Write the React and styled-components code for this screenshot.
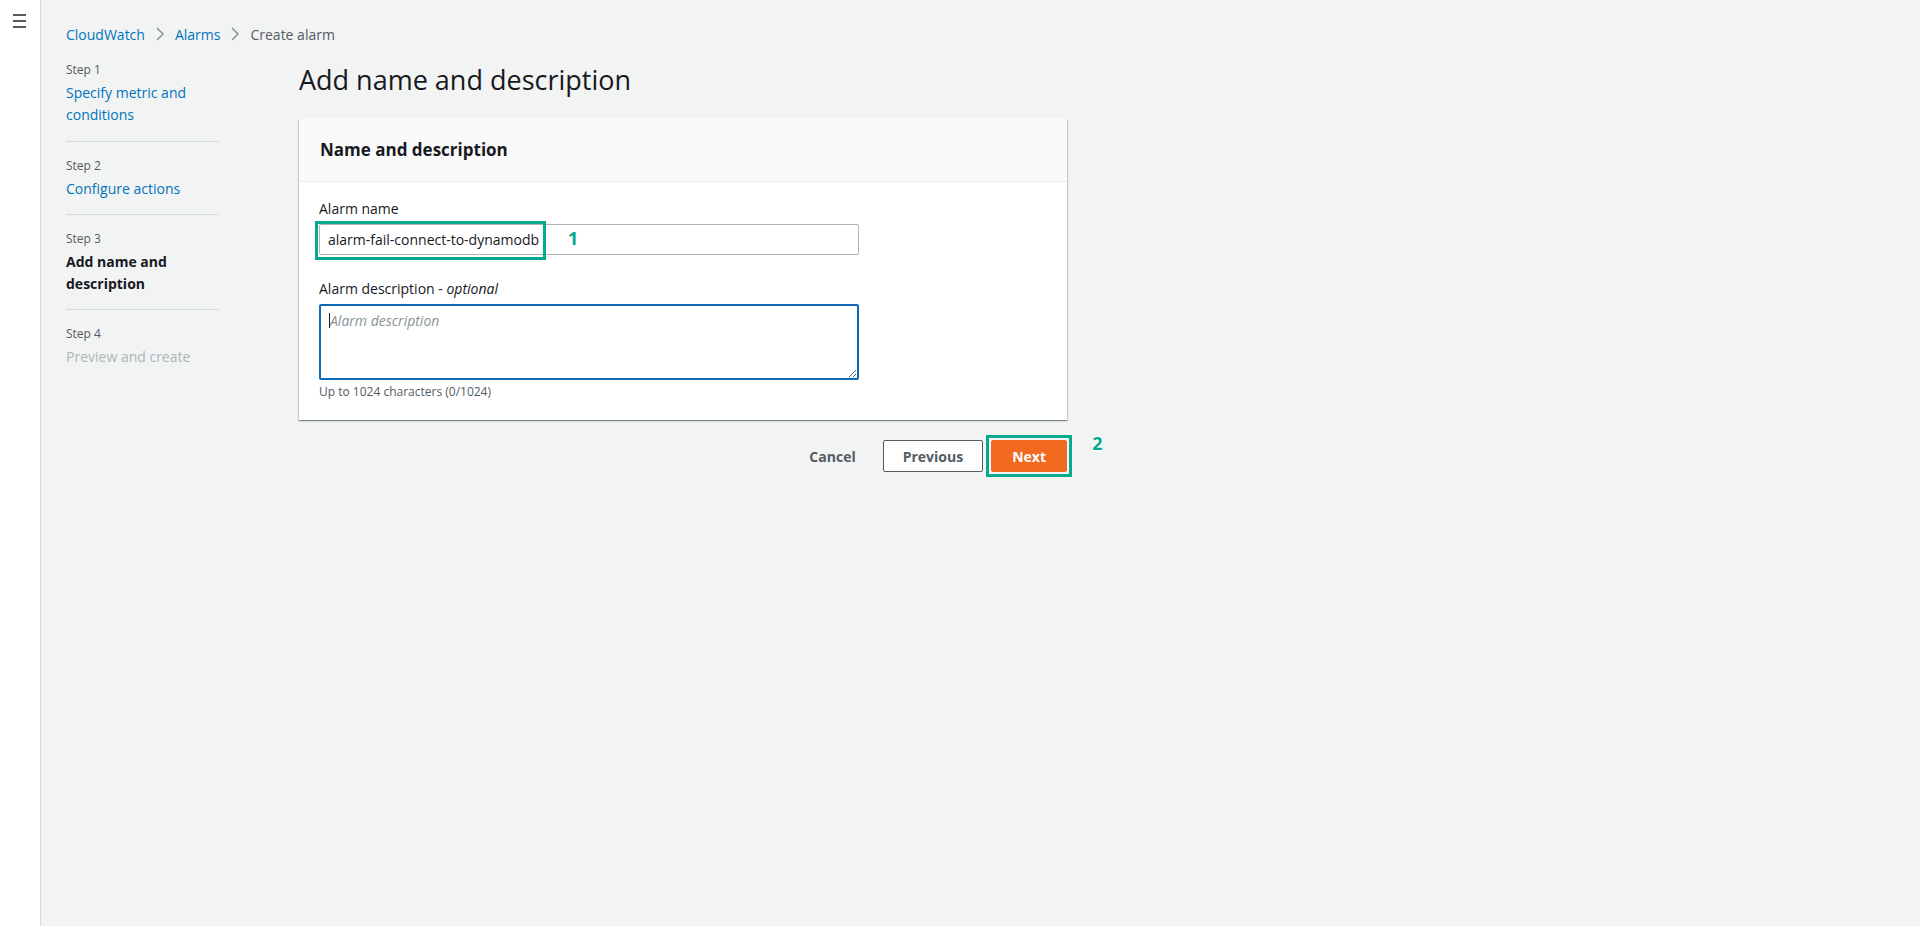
import React from "react";
import styled, { createGlobalStyle } from "styled-components";

const GlobalStyle = createGlobalStyle`
  html, body {
    margin: 0;
    padding: 0;
    background: #f2f3f3;
    font-family: "Open Sans", "Noto Sans", sans-serif;
    color: #16191f;
  }
  * {
    box-sizing: border-box;
  }
`;

const Page = styled.div`
  display: flex;
  min-height: 926px;
`;

const SideStrip = styled.div`
  width: 41px;
  flex-shrink: 0;
  background: #fff;
  border-right: 1px solid #d5dbdb;
  padding: 14px 0 0 13px;
`;

const Hamburger = styled.button`
  display: flex;
  flex-direction: column;
  gap: 4px;
  padding: 0;
  border: none;
  background: transparent;
  span {
    display: block;
    width: 13px;
    height: 2px;
    background: #545b64;
  }
`;

const Main = styled.div`
  flex: 1;
  padding: 24px 0 0 25px;
`;

const Crumbs = styled.nav`
  display: flex;
  align-items: center;
  height: 20px;
  font-size: 14px;
`;

const Crumb = styled.a`
  color: ${(p) => (p.$current ? "#545b64" : "#0073bb")};
  text-decoration: none;
`;

const Chevron = styled.span`
  display: inline-flex;
  margin: 0 10px;
  color: #879596;
`;

const Row = styled.div`
  display: flex;
  margin-top: 16px;
`;

const Steps = styled.ol`
  list-style: none;
  margin: 0;
  padding: 0;
  width: 153px;
  flex-shrink: 0;
`;

const StepItem = styled.li`
  padding: ${(p) => (p.$first ? "1px 0 15px" : "15px 0 14px")};
  border-bottom: ${(p) => (p.$last ? "none" : "1px solid #d5dbdb")};
`;

const StepNum = styled.div`
  font-size: 12px;
  line-height: 18px;
  color: #545b64;
  margin-bottom: 3px;
`;

const StepTitle = styled.div`
  font-size: 14px;
  line-height: 22px;
  color: ${(p) =>
    p.$state === "done" ? "#0073bb" : p.$state === "current" ? "#16191f" : "#aab7b8"};
  font-weight: ${(p) => (p.$state === "current" ? 700 : 400)};
`;

const Content = styled.div`
  margin-left: 80px;
  width: 768px;
`;

const Heading = styled.h1`
  margin: 0 0 19px;
  font-size: 27px;
  line-height: 40px;
  font-weight: 400;
  color: #16191f;
`;

const Panel = styled.section`
  background: #fff;
  box-shadow: 0 1px 1px 0 rgba(0, 28, 36, 0.3), 1px 1px 1px 0 rgba(0, 28, 36, 0.15),
    -1px 1px 1px 0 rgba(0, 28, 36, 0.15);
`;

const PanelHeader = styled.header`
  background: #fafafa;
  border-bottom: 1px solid #eaeded;
  padding: 20px 21px;
  font-size: 17px;
  line-height: 22px;
  font-weight: 700;
`;

const PanelBody = styled.div`
  padding: 17px 20px 20px;
`;

const Label = styled.label`
  display: block;
  font-size: 14px;
  line-height: 20px;
  margin-bottom: 5px;
  margin-top: ${(p) => (p.$spaced ? "24px" : "0")};
  em {
    font-style: italic;
  }
`;

const Field = styled.div`
  position: relative;
  width: 540px;
`;

const TextInput = styled.input`
  width: 100%;
  height: 31px;
  border: 1px solid #aab7b8;
  border-radius: 2px;
  padding: 0 8px;
  font-family: inherit;
  font-size: 14px;
  color: #16191f;
  background: #fff;
  outline: none;
`;

const TextArea = styled.textarea`
  display: block;
  width: 100%;
  height: 76px;
  border: 2px solid #0d68b6;
  border-radius: 2px;
  padding: 4px 9px;
  font-family: inherit;
  font-size: 14px;
  line-height: 22px;
  outline: none;
  resize: vertical;
  &::placeholder {
    color: #879596;
    font-style: italic;
  }
`;

const Caret = styled.span`
  position: absolute;
  left: 10px;
  top: 9px;
  width: 1px;
  height: 15px;
  background: #16191f;
`;

const Hint = styled.div`
  font-size: 12px;
  line-height: 16px;
  color: #545b64;
  margin-top: 4px;
`;

const Marker = styled.span`
  position: absolute;
  left: -4px;
  top: -3px;
  width: 231px;
  height: 39px;
  border: 3px solid #06a88e;
  pointer-events: none;
`;

const Badge = styled.span`
  position: absolute;
  left: ${(p) => p.$left}px;
  top: ${(p) => p.$top}px;
  font-size: 18px;
  line-height: 22px;
  font-weight: 700;
  color: #06a88e;
  text-shadow: -1px 0 #fff, 1px 0 #fff, 0 -1px #fff, 0 1px #fff;
`;

const Actions = styled.div`
  display: flex;
  justify-content: flex-end;
  align-items: center;
  gap: 8px;
  margin-top: 20px;
`;

const Button = styled.button`
  height: 32px;
  padding: 0 ${(p) => (p.$variant === "link" ? "18px" : p.$variant === "primary" ? "20px" : "19px")};
  border-radius: 2px;
  font-family: inherit;
  font-size: 14px;
  font-weight: 700;
  cursor: pointer;
  border: 1px solid
    ${(p) =>
      p.$variant === "primary" ? "#f0691f" : p.$variant === "link" ? "transparent" : "#545b64"};
  background: ${(p) => (p.$variant === "primary" ? "#f0691f" : p.$variant === "link" ? "transparent" : "#fff")};
  color: ${(p) => (p.$variant === "primary" ? "#fff" : "#545b64")};
`;

const Highlight = styled.span`
  position: relative;
  display: inline-flex;
  outline: 3px solid #06a88e;
  outline-offset: 2px;
`;

const steps = [
  { title: "Specify metric and conditions", state: "done" },
  { title: "Configure actions", state: "done" },
  { title: "Add name and description", state: "current" },
  { title: "Preview and create", state: "todo" },
];

const ChevronIcon = () => (
  <svg width="10" height="14" viewBox="0 0 10 14">
    <path d="M2 1l6 6-6 6" fill="none" stroke="currentColor" strokeWidth="1.5" />
  </svg>
);

const App = () => {
  return (
    <Page>
      <GlobalStyle />
      <SideStrip>
        <Hamburger aria-label="Open navigation">
          <span />
          <span />
          <span />
        </Hamburger>
      </SideStrip>
      <Main>
        <Crumbs>
          <Crumb href="#">CloudWatch</Crumb>
          <Chevron>
            <ChevronIcon />
          </Chevron>
          <Crumb href="#">Alarms</Crumb>
          <Chevron>
            <ChevronIcon />
          </Chevron>
          <Crumb $current>Create alarm</Crumb>
        </Crumbs>
        <Row>
          <Steps>
            {steps.map((s, i) => (
              <StepItem key={i} $first={i === 0} $last={i === steps.length - 1}>
                <StepNum>Step {i + 1}</StepNum>
                <StepTitle $state={s.state}>{s.title}</StepTitle>
              </StepItem>
            ))}
          </Steps>
          <Content>
            <Heading>Add name and description</Heading>
            <Panel>
              <PanelHeader>Name and description</PanelHeader>
              <PanelBody>
                <Label>Alarm name</Label>
                <Field>
                  <TextInput defaultValue="alarm-fail-connect-to-dynamodb" />
                  <Marker />
                  <Badge $left={249} $top={3}>1</Badge>
                </Field>
                <Label $spaced>
                  Alarm description - <em>optional</em>
                </Label>
                <Field>
                  <TextArea placeholder="Alarm description" />
                  <Caret />
                </Field>
                <Hint>Up to 1024 characters (0/1024)</Hint>
              </PanelBody>
            </Panel>
            <Actions>
              <Button $variant="link">Cancel</Button>
              <Button>Previous</Button>
              <Highlight>
                <Button $variant="primary">Next</Button>
                <Badge $left={101} $top={-8}>2</Badge>
              </Highlight>
            </Actions>
          </Content>
        </Row>
      </Main>
    </Page>
  );
};

export default App;
